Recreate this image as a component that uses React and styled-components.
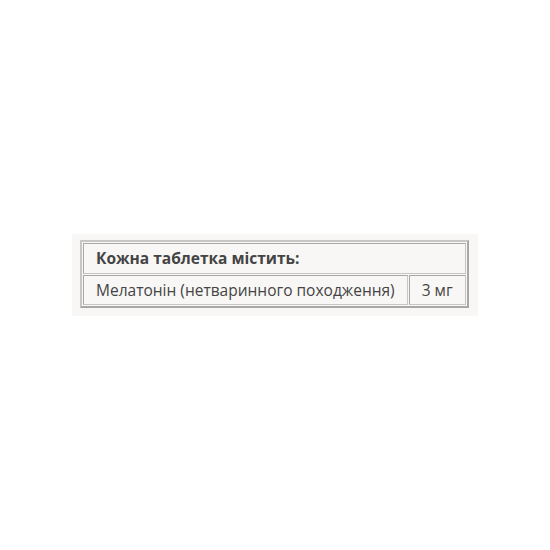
import * as React from 'react';
import styled, { createGlobalStyle } from "styled-components";

const Global = createGlobalStyle`
  html, body { margin: 0; padding: 0; background: #fff; }
  body { font-family: "Open Sans", "Liberation Sans", Arial, sans-serif; }
`;

const Page = styled.div`
  width: 550px;
  height: 550px;
  display: flex;
  align-items: center;
  justify-content: center;
`;

const Panel = styled.div`
  width: 406px;
  padding: 6px 12px 8px 8px;
  box-sizing: border-box;
  background: #f8f7f5;
`;

const Table = styled.table`
  width: 100%;
  border-collapse: separate;
  border-spacing: 1px;
  border: 2px solid #a8a8a8;
  border-top-color: #c6c6c6;
  border-left-color: #c6c6c6;
  color: #444;
  font-size: 15.5px;
`;

const Cell = styled.td`
  border: 1px solid #a8a8a8;
  border-bottom-color: #c6c6c6;
  border-right-color: #c6c6c6;
  padding: 5px 12px 4.5px 12px;
  height: 19px;
  line-height: 19px;
  font-weight: ${p => (p.$head ? 700 : 400)};
  white-space: nowrap;
  text-align: left;
`;

export default function App() {
  return (
    <>
      <Global />
      <Page>
        <Panel>
          <Table>
            <tbody>
              <tr>
                <Cell $head colSpan={2}>Кожна таблетка містить:</Cell>
              </tr>
              <tr>
                <Cell>Мелатонін (нетваринного походження)</Cell>
                <Cell>3 мг</Cell>
              </tr>
            </tbody>
          </Table>
        </Panel>
      </Page>
    </>
  );
}
